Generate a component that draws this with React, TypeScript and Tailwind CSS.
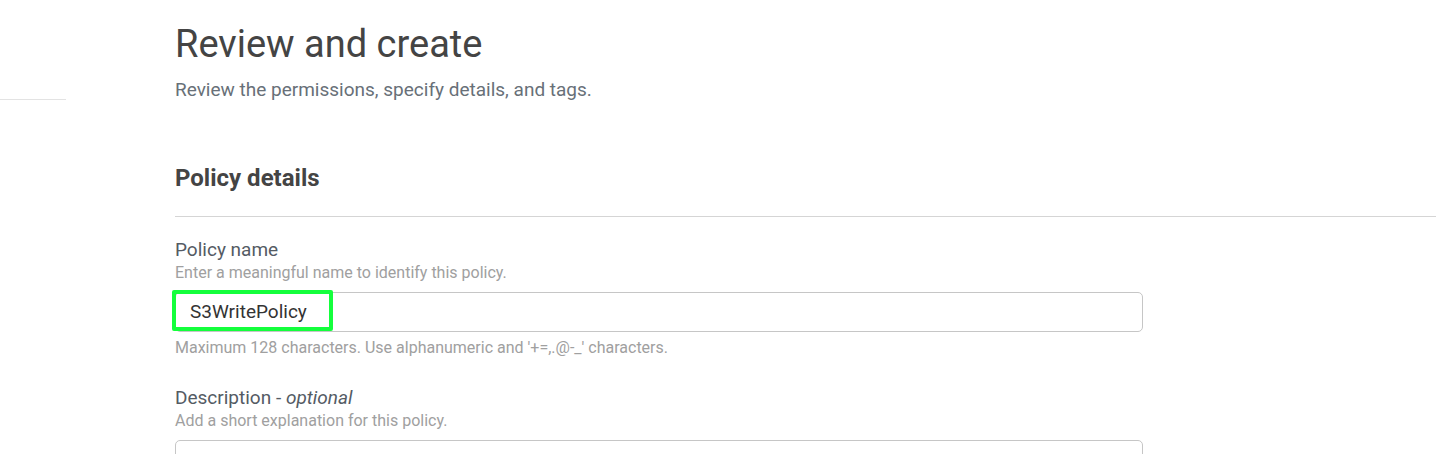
export default function App() {
  return (
    <div
      className="flex h-[454px] w-[1436px] overflow-hidden bg-white"
      style={{ fontFamily: "Roboto, 'Liberation Sans', sans-serif" }}
    >
      <aside className="w-[66px] shrink-0">
        <div className="mt-[99px] border-t border-[#e3e3e3]" />
      </aside>

      <main className="ml-[109px] flex-1">
        <h1 className="mt-[22px] text-[38px] font-normal leading-[44px] text-[#444]">
          Review and create
        </h1>
        <p className="mt-[12px] text-[19px] leading-[24px] text-[#687078]">
          Review the permissions, specify details, and tags.
        </p>

        <h2 className="mt-[62px] text-[24px] font-bold leading-[28px] text-[#444]">
          Policy details
        </h2>
        <div className="mt-[24px] border-t border-[#d5d5d5]" />

        <label className="mt-[21px] block text-[19px] leading-[24px] text-[#545b64]">
          Policy name
        </label>
        <p className="mt-[1px] text-[16px] leading-[20px] text-[#a0a0a0]">
          Enter a meaningful name to identify this policy.
        </p>
        <div className="relative mt-[9px] w-[968px]">
          <div className="flex h-[40px] items-center rounded-[5px] border border-[#c6c6c6] px-[14px] text-[19px] text-[#333]">
            S3WritePolicy
          </div>
          <div className="absolute left-[-3px] top-[-2px] h-[41px] w-[161px] rounded-[2px] border-4 border-[#14ff3c]" />
        </div>
        <p className="mt-[6px] text-[16px] leading-[20px] text-[#a0a0a0]">
          Maximum 128 characters. Use alphanumeric and '+=,.@-_' characters.
        </p>

        <label className="mt-[28px] block text-[19px] leading-[24px] text-[#545b64]">
          Description - <em>optional</em>
        </label>
        <p className="mt-[1px] text-[16px] leading-[20px] text-[#a0a0a0]">
          Add a short explanation for this policy.
        </p>
        <div className="mt-[9px] h-[60px] w-[968px] rounded-[5px] border border-[#c6c6c6]" />
      </main>
    </div>
  );
}
